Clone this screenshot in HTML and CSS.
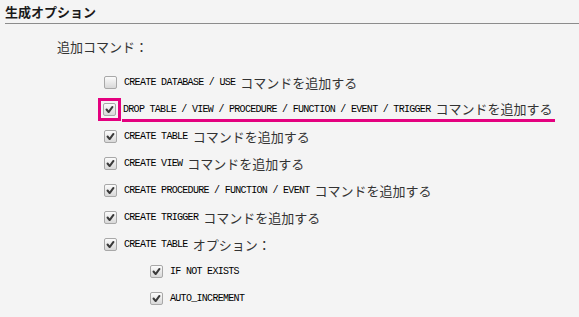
FILE: index.html
```html
<!DOCTYPE html>
<html>
<head>
<meta charset="utf-8">
<link rel="stylesheet" href="styles.css">
</head>
<body>
<div class="page">
  <h2 class="title">生成オプション</h2>
  <div class="label">追加コマンド：</div>
  <ul class="opts">
    <li class="row"><span class="cb"></span><span class="sql">CREATE DATABASE / USE</span><span class="jp">コマンドを追加する</span></li>
    <li class="row hl"><span class="cbwrap"><span class="cb on"><svg viewBox="0 0 13 13"><path d="M3 6.5 L5.5 9.5 L10 3.5" /></svg></span></span><span class="under"><span class="sql">DROP TABLE / VIEW / PROCEDURE / FUNCTION / EVENT / TRIGGER</span><span class="jp">コマンドを追加する</span></span></li>
    <li class="row"><span class="cb on"><svg viewBox="0 0 13 13"><path d="M3 6.5 L5.5 9.5 L10 3.5" /></svg></span><span class="sql">CREATE TABLE</span><span class="jp">コマンドを追加する</span></li>
    <li class="row"><span class="cb on"><svg viewBox="0 0 13 13"><path d="M3 6.5 L5.5 9.5 L10 3.5" /></svg></span><span class="sql">CREATE VIEW</span><span class="jp">コマンドを追加する</span></li>
    <li class="row"><span class="cb on"><svg viewBox="0 0 13 13"><path d="M3 6.5 L5.5 9.5 L10 3.5" /></svg></span><span class="sql">CREATE PROCEDURE / FUNCTION / EVENT</span><span class="jp">コマンドを追加する</span></li>
    <li class="row"><span class="cb on"><svg viewBox="0 0 13 13"><path d="M3 6.5 L5.5 9.5 L10 3.5" /></svg></span><span class="sql">CREATE TRIGGER</span><span class="jp">コマンドを追加する</span></li>
    <li class="row"><span class="cb on"><svg viewBox="0 0 13 13"><path d="M3 6.5 L5.5 9.5 L10 3.5" /></svg></span><span class="sql">CREATE TABLE</span><span class="jp">オプション：</span></li>
  </ul>
  <ul class="opts sub">
    <li class="row"><span class="cb on"><svg viewBox="0 0 13 13"><path d="M3 6.5 L5.5 9.5 L10 3.5" /></svg></span><span class="sql">IF NOT EXISTS</span></li>
    <li class="row"><span class="cb on"><svg viewBox="0 0 13 13"><path d="M3 6.5 L5.5 9.5 L10 3.5" /></svg></span><span class="sql">AUTO_INCREMENT</span></li>
  </ul>
</div>
</body>
</html>
```

FILE: styles.css
```css
html, body {
  margin: 0;
  padding: 0;
  background: #f4f4f4;
}
body {
  font-family: "Noto Sans CJK JP", "DejaVu Sans", sans-serif;
  color: #222;
  width: 579px;
  height: 317px;
  overflow: hidden;
}
.page {
  padding: 3px 0 0 5px;
}
.title {
  margin: 0;
  font-size: 13px;
  font-weight: bold;
  line-height: 18px;
  padding-bottom: 2px;
  border-bottom: 1px solid #8c8c8c;
  color: #1a1a1a;
}
.label {
  margin: 14px 0 0 52px;
  font-size: 13px;
  line-height: 18px;
  color: #333;
}
.opts {
  list-style: none;
  margin: 13px 0 0 0;
  padding: 0 0 0 99px;
}
.opts.sub {
  margin-top: 0;
  padding-left: 145px;
}
.row {
  display: flex;
  align-items: center;
  height: 27px;
}
.cb {
  flex: none;
  width: 11px;
  height: 11px;
  border: 1px solid #a8a8a8;
  border-radius: 2px;
  background: linear-gradient(#fbfbfb, #d8d8d8);
  margin-right: 7px;
  display: flex;
  align-items: center;
  justify-content: center;
}
.cb svg {
  width: 11px;
  height: 11px;
}
.cb path {
  fill: none;
  stroke: #3a3a3a;
  stroke-width: 2.4;
  stroke-linecap: round;
  stroke-linejoin: round;
}
.sql {
  font-family: "Liberation Mono", "DejaVu Sans Mono", monospace;
  font-size: 10px;
  color: #000;
  letter-spacing: -0.7px;
}
.jp {
  font-size: 13px;
  color: #333;
  margin-left: 5px;
  line-height: 18px;
}
.row.hl {
  margin-left: -6px;
}
.cbwrap {
  flex: none;
  border: 3px solid #e4007f;
  padding: 2px;
  margin-right: 1px;
  display: flex;
}
.cbwrap .cb {
  margin-right: 0;
}
.under {
  display: flex;
  align-items: center;
  padding: 0 3px 1px 1px;
  border-bottom: 3px solid #e4007f;
  margin-top: 3px;
}
```
